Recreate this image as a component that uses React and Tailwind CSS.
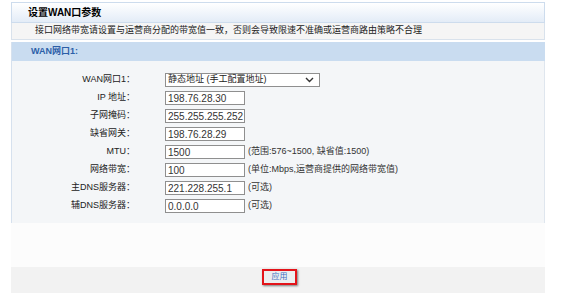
import React from "react";

const rows = [
  { label: "IP 地址：", value: "198.76.28.30" },
  { label: "子网掩码：", value: "255.255.255.252" },
  { label: "缺省网关：", value: "198.76.28.29" },
  { label: "MTU：", value: "1500", hint: "(范围:576~1500, 缺省值:1500)" },
  { label: "网络带宽：", value: "100", hint: "(单位:Mbps,运营商提供的网络带宽值)" },
  { label: "主DNS服务器：", value: "221.228.255.1", hint: "(可选)" },
  { label: "辅DNS服务器：", value: "0.0.0.0", hint: "(可选)" },
];

const font = "font-['Liberation_Sans','Noto_Sans_CJK_SC',sans-serif]";

const Row = ({ label, children }) => (
  <div className="flex items-center h-[18px]">
    <div className="w-[125px] text-right pr-[2px]">{label}</div>
    <div className="ml-[28px] flex items-center">{children}</div>
  </div>
);

export default function App() {
  return (
    <div className={`w-[571px] h-[299px] bg-white pt-[2px] pl-[11px] text-[9px] text-[#222] ${font}`}>
      <div className="w-[534px]">
        {/* title */}
        <div className="h-[21px] border border-[#cddced] bg-gradient-to-b from-white to-[#e3ecf7] flex items-center pl-[16px] font-bold text-[10px] text-black">
          设置WAN口参数
        </div>
        <div className="h-[17px] border-x border-b border-[#d9e2ec] bg-[#f5f5f5] flex items-center pl-[23px] text-[9px]">
          接口网络带宽请设置与运营商分配的带宽值一致，否则会导致限速不准确或运营商路由策略不合理
        </div>

        <div className="mt-[2px] border-l border-[#d6e1ee]">
          <div className="h-[19px] bg-[#c9dcf0] flex items-center pl-[19px] font-bold text-[#2c5fa8]">
            WAN网口1:
          </div>
          <div className="bg-[#f4f6f8] pt-[10px] pb-[8px] border-r border-[#dfe6ee]">
            <Row label="WAN网口1：">
              <div className="w-[155px] h-[14px] border border-[#8f8f8f] bg-white flex items-center justify-between pl-[2px] pr-[5px]">
                <span>静态地址 (手工配置地址)</span>
                <svg width="9" height="6" viewBox="0 0 9 6">
                  <path d="M1 1l3.5 3.5L8 1" fill="none" stroke="#333" strokeWidth="1.4" />
                </svg>
              </div>
            </Row>
            {rows.map((r) => (
              <Row key={r.label} label={r.label}>
                <input
                  readOnly
                  value={r.value}
                  className="w-[80px] h-[14px] border border-[#8f8f8f] bg-white pl-[2px] text-[10px] text-[#333] outline-none"
                />
                {r.hint && <span className="ml-[3px] text-[#333]">{r.hint}</span>}
              </Row>
            ))}
          </div>
        </div>

        <div className="h-[44px] bg-[#fcfcfc]" />

        <div className="h-[26px] bg-[#f2f2f2] flex justify-center pt-[2px]">
          <div className="ml-[3px] w-[35px] h-[16px] border-2 border-[#e3141a] bg-[#eceeef] shadow-[1px_1px_2px_rgba(0,0,0,0.5)] flex items-center justify-center text-[#3f6fc2] text-[8px]">
            应用
          </div>
        </div>
      </div>
    </div>
  );
}
